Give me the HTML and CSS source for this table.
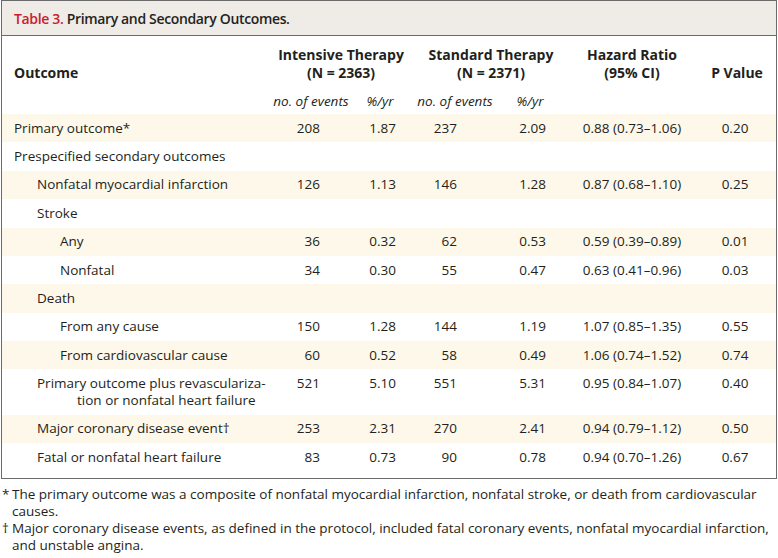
FILE: index.html
```html
<!DOCTYPE html>
<html lang="en">
<head>
<meta charset="utf-8">
<title>Table 3. Primary and Secondary Outcomes.</title>
<link rel="stylesheet" href="styles.css">
</head>
<body>
<div class="box">
  <div class="title"><span class="tnum">Table 3.</span> Primary and Secondary Outcomes.</div>
  <table class="outcomes">
    <colgroup>
      <col class="c-label"><col class="c-n1"><col class="c-p1"><col class="c-n2"><col class="c-p2"><col class="c-hr"><col class="c-pv">
    </colgroup>
    <thead>
      <tr class="h1">
        <th class="label-h" rowspan="2">Outcome</th>
        <th colspan="2" class="grp"><span class="hline">Intensive Therapy</span><span class="hline">(N = 2363)</span></th>
        <th colspan="2" class="grp grp2"><span class="hline">Standard Therapy</span><span class="hline">(N = 2371)</span></th>
        <th class="hr-h"><span class="hline">Hazard Ratio</span><span class="hline">(95% CI)</span></th>
        <th class="pv-h">P Value</th>
      </tr>
      <tr class="h2">
        <th class="sub">no. of events</th>
        <th class="sub">%/yr</th>
        <th class="sub">no. of events</th>
        <th class="sub">%/yr</th>
        <th></th>
        <th></th>
      </tr>
    </thead>
    <tbody>
      <tr class="alt"><td class="l0">Primary outcome*</td><td class="n1">208</td><td class="p">1.87</td><td class="n2">237</td><td class="p">2.09</td><td class="hr">0.88 (0.73–1.06)</td><td class="pv">0.20</td></tr>
      <tr><td class="l0">Prespecified secondary outcomes</td><td></td><td></td><td></td><td></td><td></td><td></td></tr>
      <tr class="alt"><td class="l1">Nonfatal myocardial infarction</td><td class="n1">126</td><td class="p">1.13</td><td class="n2">146</td><td class="p">1.28</td><td class="hr">0.87 (0.68–1.10)</td><td class="pv">0.25</td></tr>
      <tr><td class="l1">Stroke</td><td></td><td></td><td></td><td></td><td></td><td></td></tr>
      <tr class="alt"><td class="l2">Any</td><td class="n1">36</td><td class="p">0.32</td><td class="n2">62</td><td class="p">0.53</td><td class="hr">0.59 (0.39–0.89)</td><td class="pv">0.01</td></tr>
      <tr><td class="l2">Nonfatal</td><td class="n1">34</td><td class="p">0.30</td><td class="n2">55</td><td class="p">0.47</td><td class="hr">0.63 (0.41–0.96)</td><td class="pv">0.03</td></tr>
      <tr class="alt"><td class="l1">Death</td><td></td><td></td><td></td><td></td><td></td><td></td></tr>
      <tr><td class="l2">From any cause</td><td class="n1">150</td><td class="p">1.28</td><td class="n2">144</td><td class="p">1.19</td><td class="hr">1.07 (0.85–1.35)</td><td class="pv">0.55</td></tr>
      <tr class="alt"><td class="l2">From cardiovascular cause</td><td class="n1">60</td><td class="p">0.52</td><td class="n2">58</td><td class="p">0.49</td><td class="hr">1.06 (0.74–1.52)</td><td class="pv">0.74</td></tr>
      <tr><td class="l1 hang"><span class="line">Primary outcome plus revasculariza-</span><span class="line cont">tion or nonfatal heart failure</span></td><td class="n1">521</td><td class="p">5.10</td><td class="n2">551</td><td class="p">5.31</td><td class="hr">0.95 (0.84–1.07)</td><td class="pv">0.40</td></tr>
      <tr class="alt"><td class="l1">Major coronary disease event†</td><td class="n1">253</td><td class="p">2.31</td><td class="n2">270</td><td class="p">2.41</td><td class="hr">0.94 (0.79–1.12)</td><td class="pv">0.50</td></tr>
      <tr><td class="l1">Fatal or nonfatal heart failure</td><td class="n1">83</td><td class="p">0.73</td><td class="n2">90</td><td class="p">0.78</td><td class="hr">0.94 (0.70–1.26)</td><td class="pv">0.67</td></tr>
    </tbody>
  </table>
</div>
<div class="notes">
  <p class="note"><span class="mark">*</span><span class="ntext">The primary outcome was a composite of nonfatal myocardial infarction, nonfatal stroke, or death from cardiovascular causes.</span></p>
  <p class="note"><span class="mark">†</span><span class="ntext">Major coronary disease events, as defined in the protocol, included fatal coronary events, nonfatal myocardial infarction, and unstable angina.</span></p>
</div>
</body>
</html>
```
FILE: styles.css
```css
html, body {
  margin: 0;
  padding: 0;
  background: #ffffff;
}
body {
  font-family: "Open Sans", "Noto Sans", sans-serif;
  font-size: 13.5px;
  color: #231f20;
  width: 778px;
}
.box {
  margin: 0 1px;
  border: 1px solid #6b6b6b;
  padding-bottom: 6px;
}
.title {
  background: #efebe6;
  border-bottom: 1px solid #6b6b6b;
  height: 34px;
  line-height: 35px;
  padding-left: 12px;
  font-weight: 600;
  font-size: 14px;
  letter-spacing: -0.35px;
  color: #231f20;
}
.tnum {
  color: #c8202f;
}
.outcomes {
  width: 100%;
  border-collapse: collapse;
  table-layout: fixed;
}
.c-label { width: 270px; }
.c-n1 { width: 78px; }
.c-p1 { width: 60px; }
.c-n2 { width: 90px; }
.c-p2 { width: 60px; }
.c-hr { width: 144px; }
.c-pv { width: auto; }
th, td {
  padding: 0;
  line-height: 17px;
  white-space: nowrap;
}
th {
  font-weight: bold;
  font-size: 14px;
  text-align: center;
}
.h1 th {
  padding-top: 10px;
  padding-bottom: 6px;
  vertical-align: bottom;
  line-height: 18px;
}
.h1 .label-h {
  text-align: left;
  padding-left: 12px;
  vertical-align: top;
  padding-top: 28px;
}
.hline {
  display: block;
  line-height: 18px;
}
.grp2 {
  padding-left: 12px;
}
.pv-h {
  padding-right: 6px;
}
.h2 th {
  padding-top: 4.5px;
  padding-bottom: 4.5px;
}
.sub {
  font-weight: normal;
  font-style: italic;
  font-size: 13.5px;
}
tbody td {
  padding-top: 5.7px;
  padding-bottom: 5.7px;
  vertical-align: top;
}
tbody tr.alt {
  background: #fdf8ea;
}
.l0 { padding-left: 12px; }
.l1 { padding-left: 35px; }
.l2 { padding-left: 58px; }
.line {
  display: block;
  height: 17px;
}
.hang .cont {
  padding-left: 40px;
}
.n1 {
  text-align: right;
  padding-right: 30px;
}
.n2 {
  text-align: right;
  padding-right: 43px;
}
.p {
  text-align: right;
  padding-right: 14px;
}
.hr {
  text-align: center;
}
.pv {
  text-align: center;
  padding-right: 10px;
}
.notes {
  margin-top: 7px;
  padding: 0 0 0 2px;
}
.note {
  margin: 0;
  display: flex;
  line-height: 17px;
}
.mark {
  flex: 0 0 10px;
}
.ntext {
  flex: 1;
}
```
